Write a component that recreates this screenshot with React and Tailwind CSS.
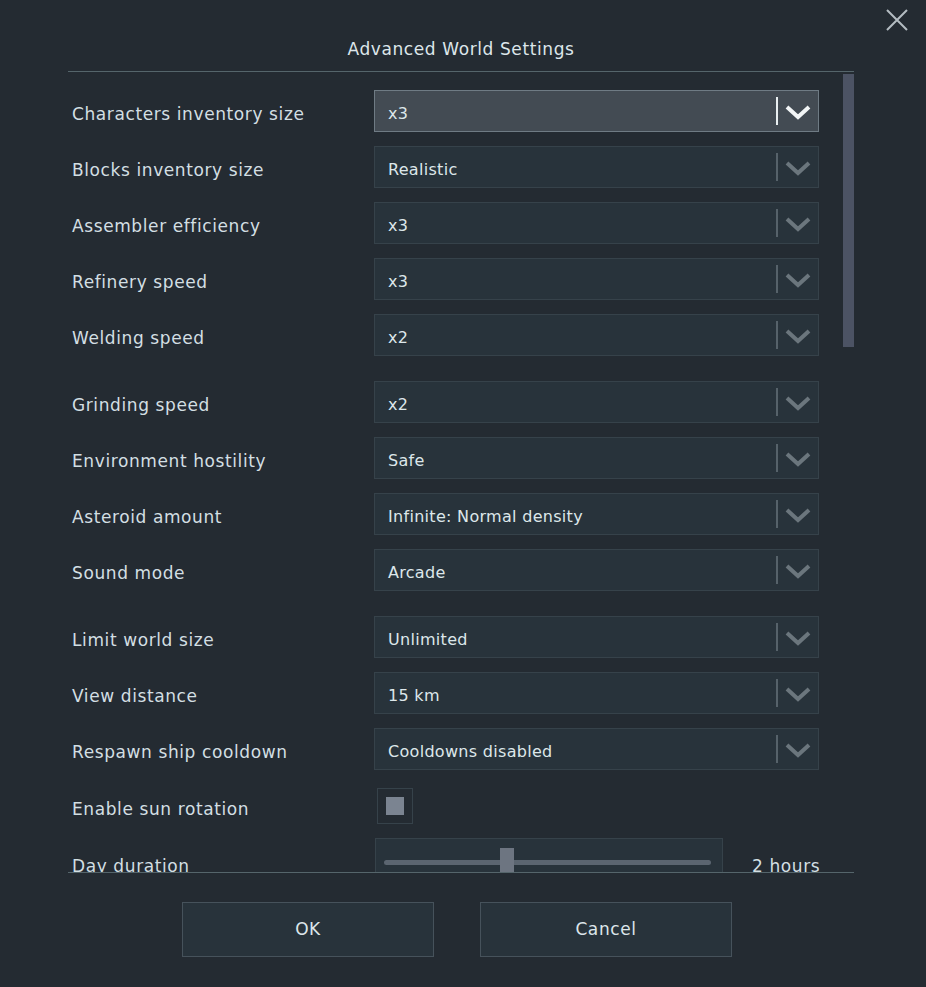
import React from "react";

const font = { fontFamily: '"DejaVu Sans", Verdana, sans-serif' };

function Chevron({ active }) {
  return (
    <svg width="28" height="18" viewBox="0 0 28 18" className="block">
      <polyline
        points="3,4 14,14 25,4"
        fill="none"
        stroke={active ? "#f2f5f6" : "#6b767d"}
        strokeWidth="4"
        strokeLinecap="butt"
        strokeLinejoin="miter"
      />
    </svg>
  );
}

function Dropdown({ value, active }) {
  return (
    <div
      className={
        "w-[445px] h-[42px] flex items-center border " +
        (active ? "bg-[#434b53] border-[#6f7b84]" : "bg-[#28333b] border-[#36424a]")
      }
    >
      <div className="flex-1 pl-[13px] pt-[6px] text-[16px] tracking-[0.3px] text-[#dde7ea]">{value}</div>
      <div className={"w-[2px] h-[28px] " + (active ? "bg-[#e8eef0]" : "bg-[#56626a]")} />
      <div className="w-[40px] flex items-center justify-center pt-[2px]">
        <Chevron active={active} />
      </div>
    </div>
  );
}

function Row({ label, children }) {
  return (
    <div className="flex items-center h-[42px]">
      <div className="w-[302px] pt-[7px] text-[17px] tracking-[0.6px] text-[#d3dfe3]">{label}</div>
      {children}
    </div>
  );
}

export default function App() {
  const groups = [
    [
      ["Characters inventory size", "x3", true],
      ["Blocks inventory size", "Realistic"],
      ["Assembler efficiency", "x3"],
      ["Refinery speed", "x3"],
      ["Welding speed", "x2"],
    ],
    [
      ["Grinding speed", "x2"],
      ["Environment hostility", "Safe"],
      ["Asteroid amount", "Infinite: Normal density"],
      ["Sound mode", "Arcade"],
    ],
    [
      ["Limit world size", "Unlimited"],
      ["View distance", "15 km"],
      ["Respawn ship cooldown", "Cooldowns disabled"],
    ],
  ];

  return (
    <div className="w-[926px] h-[987px] bg-[#242b32] relative overflow-hidden" style={font}>
      {/* close */}
      <div className="absolute right-[17px] top-[8px]">
        <svg width="24" height="24" viewBox="0 0 24 24">
          <path d="M2 2 L22 22 M22 2 L2 22" stroke="#b4bcc2" strokeWidth="2" />
        </svg>
      </div>

      <div className="h-[71px] flex items-center justify-center pt-[28px]">
        <div className="text-[17px] tracking-[0.6px] text-[#dde6ea] mr-[4px]">Advanced World Settings</div>
      </div>

      <div className="ml-[68px] w-[786px] h-[1px] bg-[#55656b]" />

      <div className="ml-[68px] w-[786px] h-[800px] relative overflow-hidden">
        {/* scrollbar */}
        <div className="absolute right-0 top-[2px] w-[11px] h-[273px] bg-[#4c5364]" />

        <div className="pl-[4px] pt-[18px] flex flex-col gap-[25px]">
          {groups.map((g, gi) => (
            <div key={gi} className="flex flex-col gap-[14px]">
              {g.map(([l, v, a]) => (
                <Row key={l} label={l}>
                  <Dropdown value={v} active={a} />
                </Row>
              ))}
            </div>
          ))}
        </div>

        <div className="pl-[4px] mt-[14px] flex flex-col gap-[12px]">
          <div className="flex items-start h-[42px]">
            <div className="w-[302px] pt-[14px] leading-[22px] text-[17px] tracking-[0.6px] text-[#d3dfe3]">
              Enable sun rotation
            </div>
            <div className="w-[36px] h-[36px] ml-[3px] mt-[4px] border border-[#36424a] flex items-center justify-center">
              <div className="w-[18px] h-[18px] bg-[#7b8491]" />
            </div>
          </div>
          <div className="flex items-start h-[44px]">
            <div className="w-[302px] pt-[17px] leading-[22px] text-[17px] tracking-[0.6px] text-[#d3dfe3]">
              Day duration
            </div>
            <div className="w-[348px] h-[44px] ml-[1px] bg-[#28333b] border border-[#36424a] relative">
              <div className="absolute left-[8px] right-[11px] top-[21px] h-[5px] rounded-full bg-[#5b6570]" />
              <div className="absolute left-[124px] top-[9px] w-[14px] h-[24px] bg-[#6d7581]" />
            </div>
            <div className="ml-[29px] pt-[17px] leading-[22px] text-[17px] tracking-[0.6px] text-[#d3dfe3]">
              2 hours
            </div>
          </div>
        </div>
      </div>

      <div className="ml-[68px] w-[786px] h-[1px] bg-[#55656b]" />

      <div className="flex gap-[46px] mt-[29px] ml-[182px]">
        <div className="w-[252px] h-[55px] bg-[#28333b] border border-[#46525b] flex items-center justify-center text-[17px] tracking-[0.6px] text-[#dde6ea]">
          OK
        </div>
        <div className="w-[252px] h-[55px] bg-[#28333b] border border-[#46525b] flex items-center justify-center text-[17px] tracking-[0.6px] text-[#dde6ea]">
          Cancel
        </div>
      </div>
    </div>
  );
}
